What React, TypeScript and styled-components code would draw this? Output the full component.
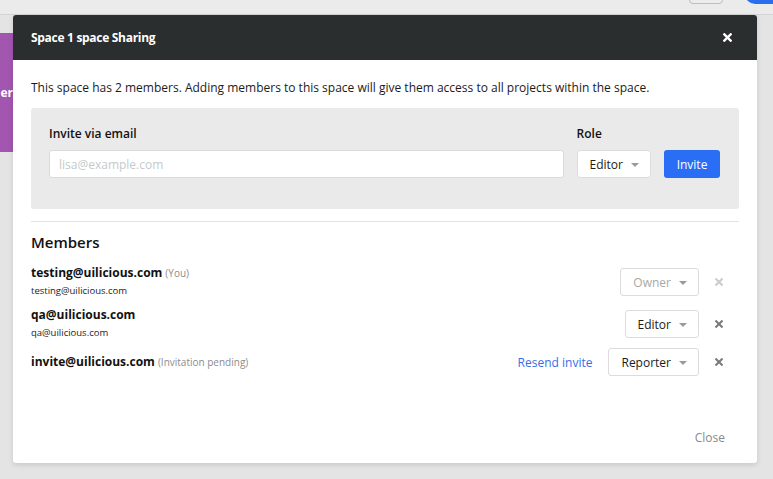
import styled, { createGlobalStyle } from 'styled-components';

const GlobalStyle = createGlobalStyle`
	html, body {
		margin: 0;
		padding: 0;
		background: #e4e4e4;
		font-family: 'Open Sans', 'Liberation Sans', sans-serif;
		color: #1b1b1b;
	}
	* {
		box-sizing: border-box;
	}
`;

const Page = styled.div`
	position: relative;
	width: 773px;
	height: 479px;
	overflow: hidden;
	background: #e4e4e4;
`;

const TopBar = styled.div`
	height: 15px;
	background: #ebebeb;
	border-bottom: 1px solid #d4d4d4;
	display: flex;
	justify-content: flex-end;
	align-items: flex-end;
	gap: 22px;
`;

const GhostButton = styled.div`
	width: 34px;
	height: 20px;
	margin-bottom: 10px;
	border: 1px solid #bdbdbd;
	border-radius: 4px;
	background: #ececec;
`;

const BlueButton = styled.div`
	width: 28px;
	height: 20px;
	margin-bottom: 10px;
	border-radius: 10px 0 0 10px;
	background: #2a6ef0;
`;

const Sidebar = styled.div`
	width: 13px;
	padding-top: 18px;
`;

const SidebarItem = styled.div`
	height: 119px;
	background: #a256b0;
	display: flex;
	align-items: center;
	justify-content: flex-end;
	overflow: hidden;
	color: #fff;
	font-weight: 700;
	font-size: 12px;
	white-space: nowrap;
`;

const Modal = styled.div`
	position: absolute;
	top: 15px;
	left: 13px;
	width: 744px;
	height: 448px;
	background: #fff;
	border-radius: 3px;
	box-shadow: 0 2px 5px rgba(0, 0, 0, 0.12);
	overflow: hidden;
	display: flex;
	flex-direction: column;
`;

const ModalHeader = styled.div`
	height: 45px;
	background: #2a2e2e;
	display: flex;
	align-items: center;
	justify-content: space-between;
	padding: 0 25px 0 18px;
`;

const ModalTitle = styled.div`
	color: #fff;
	font-weight: 700;
	font-size: 12px;
	letter-spacing: -0.3px;
`;

const ModalBody = styled.div`
	flex: 1;
	padding: 19px 18px 0 18px;
	display: flex;
	flex-direction: column;
`;

const Intro = styled.p`
	margin: 0;
	font-size: 12px;
	line-height: 18px;
	color: #1b1b1b;
`;

const InvitePanel = styled.div`
	margin-top: 11px;
	height: 101px;
	background: #eaeaea;
	border-radius: 3px;
	padding: 17px 19px 0 18px;
	display: flex;
	gap: 13px;
`;

const Field = styled.div<{ $grow?: boolean }>`
	display: flex;
	flex-direction: column;
	gap: 7px;
	flex: ${(p) => (p.$grow ? 1 : '0 0 auto')};
`;

const Label = styled.div`
	font-size: 12px;
	font-weight: 600;
	line-height: 18px;
	color: #111;
	height: 18px;
`;

const EmailInput = styled.input`
	height: 28px;
	border: 1px solid #dadada;
	border-radius: 3px;
	padding: 0 9px;
	font-family: inherit;
	font-size: 12px;
	outline: none;
	&::placeholder {
		color: #c4cacc;
	}
`;

const InviteButton = styled.button`
	height: 28px;
	width: 56px;
	border: none;
	border-radius: 3px;
	background: #2a6ef5;
	color: #fff;
	font-family: inherit;
	font-size: 12px;
	padding: 0;
`;

const SelectBox = styled.div<{ $disabled?: boolean }>`
	height: 28px;
	display: inline-flex;
	align-items: center;
	gap: 8px;
	padding: 0 11px 0 12px;
	background: #fff;
	border: 1px solid #dcdcdc;
	border-radius: 3px;
	font-size: 12px;
	color: ${(p) => (p.$disabled ? '#a8a8a8' : '#1b1b1b')};
`;

const Caret = styled.span`
	width: 0;
	height: 0;
	border-left: 4px solid transparent;
	border-right: 4px solid transparent;
	border-top: 4px solid #9a9a9a;
	margin-top: 1px;
`;

const Divider = styled.hr`
	margin: 12px 0 0 0;
	border: none;
	border-top: 1px solid #e2e2e2;
`;

const MembersTitle = styled.h3`
	margin: 9px 0 0 0;
	font-size: 15px;
	font-weight: 600;
	line-height: 22px;
	color: #111;
`;

const MemberList = styled.div`
	margin-top: 11px;
	display: flex;
	flex-direction: column;
	gap: 6px;
`;

const MemberRow = styled.div`
	display: flex;
	align-items: center;
	min-height: 28px;
`;

const MemberInfo = styled.div`
	flex: 1;
	display: flex;
	flex-direction: column;
`;

const MemberName = styled.div`
	font-size: 12px;
	font-weight: 700;
	line-height: 18px;
	color: #111;
`;

const MemberTag = styled.span`
	font-size: 10px;
	font-weight: 400;
	color: #8c8c8c;
	margin-left: 3px;
`;

const MemberEmail = styled.div`
	font-size: 9.5px;
	line-height: 18px;
	color: #222;
`;

const ResendLink = styled.a`
	font-size: 12px;
	color: #3a6ce8;
	margin-right: 16px;
	cursor: pointer;
`;

const RemoveCell = styled.div`
	width: 40px;
	display: flex;
	justify-content: center;
	align-items: center;
`;

const ModalFooter = styled.div`
	display: flex;
	justify-content: flex-end;
	padding: 0 18px 10px 18px;
`;

const CloseButton = styled.button`
	border: none;
	background: none;
	font-family: inherit;
	font-size: 12px;
	color: #8a8a8a;
	padding: 6px 14px;
	line-height: 18px;
`;

function Cross({ color, size = 8 }: { color: string; size?: number }) {
	return (
		<svg width={size} height={size} viewBox="0 0 10 10">
			<path d="M1.5 1.5 L8.5 8.5 M8.5 1.5 L1.5 8.5" stroke={color} strokeWidth="2.6" strokeLinecap="square" />
		</svg>
	);
}

interface Member {
	name: string;
	tag?: string;
	email?: string;
	role: string;
	disabled?: boolean;
	resend?: boolean;
}

const members: Member[] = [
	{ name: 'testing@uilicious.com', tag: '(You)', email: 'testing@uilicious.com', role: 'Owner', disabled: true },
	{ name: 'qa@uilicious.com', email: 'qa@uilicious.com', role: 'Editor' },
	{ name: 'invite@uilicious.com', tag: '(Invitation pending)', role: 'Reporter', resend: true },
];

export default function App() {
	return (
		<Page>
			<GlobalStyle />
			<TopBar>
				<GhostButton />
				<BlueButton />
			</TopBar>
			<Sidebar>
				<SidebarItem>er</SidebarItem>
			</Sidebar>
			<Modal>
				<ModalHeader>
					<ModalTitle>Space 1 space Sharing</ModalTitle>
					<Cross color="#fff" size={9} />
				</ModalHeader>
				<ModalBody>
					<Intro>
						This space has 2 members. Adding members to this space will give them access to all projects within the space.
					</Intro>
					<InvitePanel>
						<Field $grow>
							<Label>Invite via email</Label>
							<EmailInput placeholder="lisa@example.com" />
						</Field>
						<Field>
							<Label>Role</Label>
							<SelectBox>
								Editor <Caret />
							</SelectBox>
						</Field>
						<Field>
							<Label />
							<InviteButton>Invite</InviteButton>
						</Field>
					</InvitePanel>
					<Divider />
					<MembersTitle>Members</MembersTitle>
					<MemberList>
						{members.map((m) => (
							<MemberRow key={m.name}>
								<MemberInfo>
									<MemberName>
										{m.name}
										{m.tag && <MemberTag>{m.tag}</MemberTag>}
									</MemberName>
									{m.email && <MemberEmail>{m.email}</MemberEmail>}
								</MemberInfo>
								{m.resend && <ResendLink>Resend invite</ResendLink>}
								<SelectBox $disabled={m.disabled}>
									{m.role} <Caret />
								</SelectBox>
								<RemoveCell>
									<Cross color={m.disabled ? '#cccccc' : '#7a7a7a'} />
								</RemoveCell>
							</MemberRow>
						))}
					</MemberList>
				</ModalBody>
				<ModalFooter>
					<CloseButton>Close</CloseButton>
				</ModalFooter>
			</Modal>
		</Page>
	);
}
